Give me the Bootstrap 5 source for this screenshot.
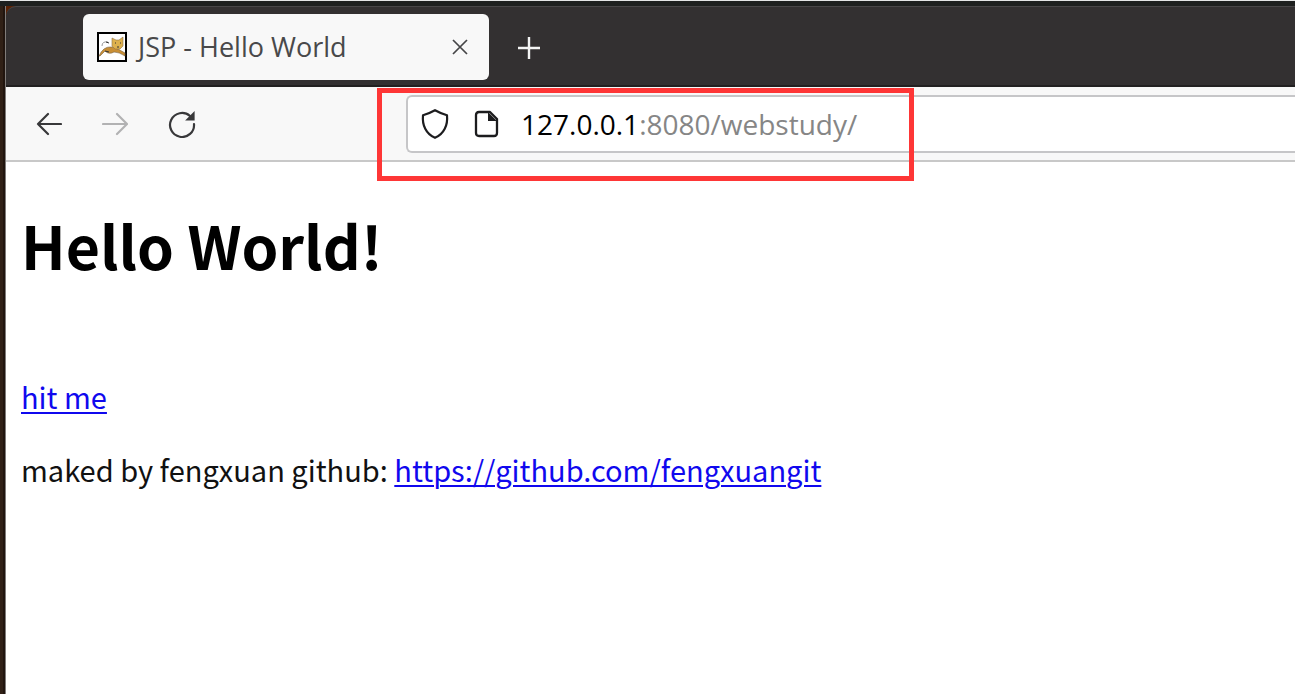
<!DOCTYPE html>
<html lang="en">
<head>
<meta charset="utf-8">
<meta name="viewport" content="width=device-width, initial-scale=1">
<title>JSP - Hello World</title>
<link href="https://cdn.jsdelivr.net/npm/bootstrap@5.3.0/dist/css/bootstrap.min.css" rel="stylesheet">
<style>
body { background: #2b1d15; font-family: "Noto Sans", sans-serif; color: #000; }
.desktop-bar { height: 6px; background: #1e201f; border-top: 1px solid #e4e5e5; }
.corner { background: #5a2205; }
.browser { margin-left: 5px; border-left: 1px solid #807c7a; background: #fff; }
.desktop { background: linear-gradient(90deg, #302016 3px, #21150f 3px); }
.tabstrip { background: #333031; border-top: 1px solid #484647; border-bottom: 2px solid #222021; border-top-left-radius: 10px; padding: 7px 0 5px 77px; }
.tab { width: 406px; height: 66px; background: #f8f8f8; border-radius: 6px; padding: 0 14px; }
.tab-title { font: 27px/36px "Open Sans", sans-serif; color: #49494a; margin-left: 11px; }
.plain { border: 0; background: none; padding: 0; display: flex; color: inherit; }
.tools { background: #f8f8f8; border-bottom: 2px solid #c8c8c8; padding: 8px 0 7px 30px; }
.nav-buttons { width: 370px; gap: 40px; color: #38383a; }
.address { border: 2px solid #c6c6c8; border-right: 0; border-radius: 6px 0 0 6px; height: 58px; padding-left: 13px; color: #1c1c1e; }
.host, .path { font: 28px/36px "Open Sans", sans-serif; }
.host { color: #000; margin-left: 20px; }
.path { color: #868686; border: 0; outline: 0; background: none; padding: 0; min-width: 0; }
.highlight { position: absolute; left: -29px; top: -7px; width: 537px; height: 93px; border: 5px solid #fe3636; pointer-events: none; }
.content { font: 29px/44px "Noto Sans CJK SC", sans-serif; padding: 39px 15px; color: #111; }
.content h1 { font-size: 59px; line-height: 88px; font-weight: 700; margin: 0 0 85px; color: #000; }
.content p { margin: 0 0 29px; }
.content a { color: #1008ee; text-decoration-thickness: 2px; text-underline-offset: 3px; }
</style>
</head>
<body class="min-vh-100 d-flex flex-column">
<div class="desktop-bar"></div>
<div class="desktop flex-grow-1 d-flex flex-column">
<div class="browser flex-grow-1">
  <header>
    <div class="corner">
      <div class="tabstrip d-flex align-items-start">
        <div class="tab d-flex align-items-center">
          <svg width="30" height="30" viewBox="0 0 30 30" aria-hidden="true">
            <path d="M1 1h28v28H1z" fill="#fff" stroke="#000" stroke-width="2"/>
            <path d="M5 14q0-5 6-4M7 17q3 4 6 2" fill="none" stroke="#999" stroke-width="1"/>
            <path d="M2 24Q6 14 15 15L21 17 28 21v3Q22 20 17 20 12 23 8 19L3 24z" fill="#c98f35" stroke="#75603f" stroke-width=".6"/>
            <path d="M15 6l4 2h3l4-3v9l-3 3h-5l-3-3z" fill="#ddb14e" stroke="#927445" stroke-width=".6"/>
            <path d="M18 11h1m4 0h1m-4 4h2M9 10l3 1m-4 8l4 1" stroke="#333" fill="none"/>
          </svg>
          <span class="tab-title flex-grow-1">JSP - Hello World</span>
          <button class="plain" aria-label="Close tab"><svg width="30" height="30" viewBox="0 0 30 30" fill="none" stroke="#454547" stroke-width="1.7"><path d="M8 8l14 14M22 8L8 22"/></svg></button>
        </div>
        <button class="plain text-white ms-4 mt-3" aria-label="New tab"><svg width="32" height="36" viewBox="0 0 32 36" fill="none" stroke="#f4f4f4" stroke-width="2.4"><path d="M5 18h22M16 7v22"/></svg></button>
      </div>
    </div>
    <nav class="tools d-flex align-items-center" aria-label="Navigation">
      <div class="nav-buttons d-flex flex-shrink-0 align-items-center">
        <button class="plain" aria-label="Back"><svg width="26" height="26" viewBox="0 0 26 26" fill="none" stroke="currentColor" stroke-width="2.2" stroke-linecap="round" stroke-linejoin="round"><path d="M12 3L2 13l10 10M2 13h23"/></svg></button>
        <button class="plain" aria-label="Forward" disabled><svg width="26" height="26" viewBox="0 0 26 26" fill="none" stroke="#b2b2b3" stroke-width="2.2" stroke-linecap="round" stroke-linejoin="round"><path d="M15 3l10 10-10 10M25 13H1"/></svg></button>
        <button class="plain" aria-label="Reload"><svg width="28" height="28" viewBox="0 0 28 28" fill="none" stroke="currentColor" stroke-width="2.2"><path d="M22 6A12 12 0 1 0 26 14" stroke-linecap="round"/><path d="M26.600 1v9.500h-9.500z" fill="currentColor" stroke="none"/></svg></button>
      </div>
      <div class="position-relative flex-grow-1">
        <div class="address bg-white d-flex align-items-center">
          <button class="plain" aria-label="Tracking protection"><svg width="28" height="32" viewBox="0 0 28 32" fill="none" stroke="currentColor" stroke-width="2.2" stroke-linejoin="round"><path d="M14 2.200Q20 5.500 26 7.300C27 17 23 26 14 29.800 5 26 1 17 2 7.300Q8 5.500 14 2.200z"/></svg></button>
          <button class="plain ms-4" aria-label="Site information"><svg width="28" height="30" viewBox="-1 0 28 30" fill="none" stroke="currentColor" stroke-width="2.300" stroke-linejoin="round"><path d="M5 3h11l7 7v14q0 3-3 3H5q-3 0-3-3V6q0-3 3-3z"/><path d="M14 3v9h9z" fill="currentColor" stroke="none"/></svg></button>
          <label class="host" for="url">127.0.0.1</label>
          <input class="path flex-grow-1" id="url" type="text" value=":8080/webstudy/" spellcheck="false">
        </div>
        <div class="highlight"></div>
      </div>
    </nav>
  </header>
  <main class="content">
    <h1>Hello World!</h1>
    <p><a href="hello-servlet">hit me</a></p>
    <p>maked by fengxuan github: <a href="https://github.com/fengxuangit">https://github.com/fengxuangit</a></p>
  </main>
</div>
</div>
<script src="https://cdn.jsdelivr.net/npm/bootstrap@5.3.0/dist/js/bootstrap.bundle.min.js"></script>
</body>
</html>
